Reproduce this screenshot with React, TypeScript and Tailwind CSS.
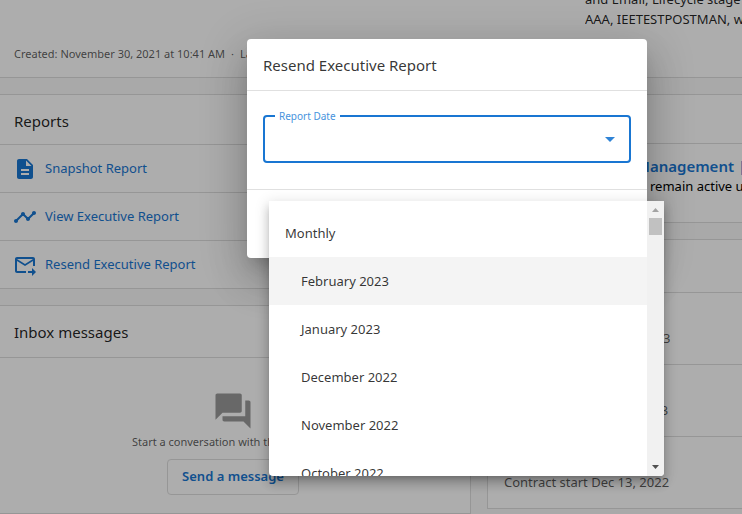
import type { ReactNode } from "react";
import {
  MdArrowDropDown,
  MdDescription,
  MdForum,
  MdOutlineForwardToInbox,
  MdTimeline,
} from "react-icons/md";

const months = [
  "February 2023",
  "January 2023",
  "December 2022",
  "November 2022",
  "October 2022",
];

const contracts = [
  "Contract start Mar 13, 2023",
  "Contract start Feb 13, 2023",
  "Contract start Dec 13, 2022",
];

function ReportLink({ icon, children }: { icon: ReactNode; children: ReactNode }) {
  return (
    <li className="h-12 border-t border-[#dedede]">
      <a href="#" className="flex h-full items-center gap-2 pl-[13px] text-[13px] text-[#1976d2]">
        <span className="text-2xl">{icon}</span>
        {children}
      </a>
    </li>
  );
}

function Page() {
  return (
    <div className="flex h-screen flex-col overflow-hidden bg-[#fafafa] text-black/87">
      <section className="flex h-[78px] shrink-0 justify-between border-b border-[#dedede] bg-white">
        <p className="mt-11 ml-3.5 flex gap-1.5 text-[11px] leading-5 text-black/65">
          <span>Created: November 30, 2021 at 10:41 AM</span>
          <span>·</span>
          <span>Last updated</span>
        </p>
        <p className="-mt-[11px] w-[157px] overflow-hidden text-[13px] leading-5 whitespace-nowrap">
          and Email, Lifecycle stage
          <br />
          AAA, IEETESTPOSTMAN, with
        </p>
      </section>

      <div className="mt-4 flex flex-1 gap-4">
        <div className="flex w-[471px] shrink-0 flex-col gap-4">
          <section className="border-y border-r border-[#dedede] bg-white">
            <h2 className="flex h-[49px] items-center pt-1 pl-3.5 text-[15px]">Reports</h2>
            <ul>
              <ReportLink icon={<MdDescription />}>Snapshot Report</ReportLink>
              <ReportLink icon={<MdTimeline />}>View Executive Report</ReportLink>
              <ReportLink icon={<MdOutlineForwardToInbox />}>Resend Executive Report</ReportLink>
            </ul>
          </section>

          <section className="border-y border-r border-[#dedede] bg-white">
            <h2 className="flex h-[52px] items-center border-b border-[#dedede] pt-0.5 pl-3.5 text-[15px]">
              Inbox messages
            </h2>
            <div className="flex flex-col items-center pt-8 pr-1 pb-[18px]">
              <MdForum className="size-[42px] text-[#9a9a9a]" />
              <p className="mb-[7px] text-[11px] leading-5 text-black/65">
                Start a conversation with this customer
              </p>
              <button
                type="button"
                className="h-9 rounded border border-[#dedede] px-3.5 text-[13px] font-semibold text-[#1976d2]"
              >
                Send a message
              </button>
            </div>
          </section>
        </div>

        <div className="flex min-w-0 flex-1 flex-col gap-4">
          <section className="border-y border-l border-[#dedede] bg-white">
            <div className="h-12" />
            <div className="h-[79px] overflow-hidden border-t border-[#dedede] pt-3 pl-[148px] whitespace-nowrap">
              <a href="#" className="block text-[15px] leading-5 font-semibold text-[#1976d2]">
                Management | Pro
              </a>
              <p className="pl-3.5 text-[13px] leading-5 text-black">remain active until</p>
            </div>
          </section>

          <section className="border-y border-l border-[#dedede] bg-white">
            <div className="h-[52px]" />
            <ul>
              {contracts.map((text) => (
                <li
                  key={text}
                  className="flex h-[72px] items-center border-t border-[#dedede] pt-5 pl-4 text-[13px] text-black/65"
                >
                  {text}
                </li>
              ))}
            </ul>
          </section>
        </div>
      </div>
    </div>
  );
}

function MonthMenu() {
  return (
    <div className="absolute top-[162px] left-[22px] flex h-[275px] w-[395px] overflow-hidden rounded-b-sm bg-white shadow-[0_5px_5px_-3px_rgba(0,0,0,0.2),0_8px_10px_1px_rgba(0,0,0,0.14),0_3px_14px_2px_rgba(0,0,0,0.12)]">
      <div
        className="flex-1 overflow-hidden pt-2 text-[13px] text-black/80"
        role="listbox"
        aria-label="Report Date"
      >
        <div className="flex h-12 items-center px-4 pt-0.5">Monthly</div>
        {months.map((month, i) => (
          <div
            key={month}
            role="option"
            aria-selected={i === 0}
            className="flex h-12 items-center px-8 pt-0.5 aria-selected:bg-[#f4f4f4]"
          >
            {month}
          </div>
        ))}
      </div>
      <div className="flex w-[17px] flex-col items-center bg-[#f1f1f1]">
        <svg className="h-[17px] w-[17px]" viewBox="0 0 17 17" fill="#a3a3a3">
          <path d="M5 11h7L8.500 7z" />
        </svg>
        <div className="h-[17px] w-[13px] bg-[#c1c1c1]" />
        <svg className="mt-auto h-[17px] w-[17px]" viewBox="0 0 17 17" fill="#505050">
          <path d="M5 6h7L8.500 10z" />
        </svg>
      </div>
    </div>
  );
}

export default function App() {
  return (
    <div className="relative font-['Noto_Sans',sans-serif]">
      <Page />
      <div className="absolute inset-0 overflow-hidden bg-black/32 pt-[39px] pl-[247px] text-black/80">
        <div
          role="dialog"
          aria-labelledby="dialog-title"
          className="relative w-[400px] rounded bg-white shadow-[0_11px_15px_-7px_rgba(0,0,0,0.2),0_24px_38px_3px_rgba(0,0,0,0.14),0_9px_46px_8px_rgba(0,0,0,0.12)]"
        >
          <h1
            id="dialog-title"
            className="flex h-13 items-center border-b border-[#e0e0e0] px-4 pt-0.5 text-[15px]"
          >
            Resend Executive Report
          </h1>
          <div className="relative px-4 pt-6 pb-[26px]">
            <label
              htmlFor="report-date"
              className="absolute top-[17px] left-7 bg-white px-1 text-[10px] leading-4 text-[#4793dd]"
            >
              Report Date
            </label>
            <select
              id="report-date"
              defaultValue=""
              className="block h-12 w-full appearance-none rounded border-2 border-[#1976d2] bg-white px-3 text-sm"
            >
              <option value="" />
              {months.map((month) => (
                <option key={month}>{month}</option>
              ))}
            </select>
            <MdArrowDropDown className="pointer-events-none absolute top-9 right-[25px] size-6 text-[#2f83d6]" />
          </div>
          <div className="h-[69px] border-t border-[#e0e0e0]" />
          <MonthMenu />
        </div>
      </div>
    </div>
  );
}
